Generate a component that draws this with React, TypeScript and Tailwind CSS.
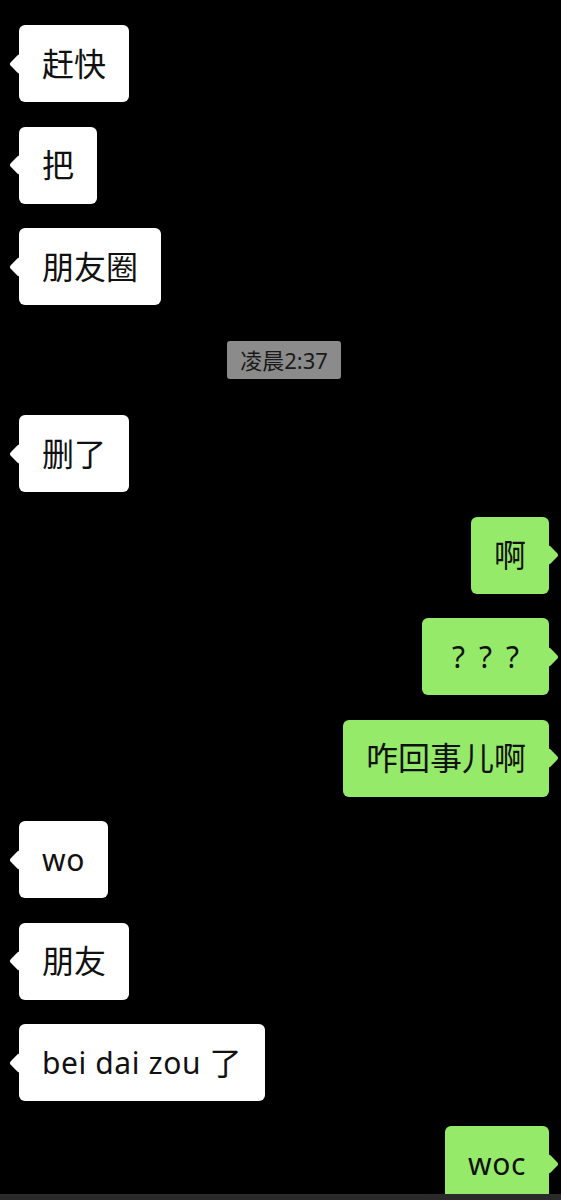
import React from "react";

type Seg = { t: string; latin?: boolean; q?: boolean };
type Msg =
  | { kind: "in" | "out"; segs: Seg[] }
  | { kind: "time"; text: string };

const msgs: Msg[] = [
  { kind: "in", segs: [{ t: "赶快" }] },
  { kind: "in", segs: [{ t: "把" }] },
  { kind: "in", segs: [{ t: "朋友圈" }] },
  { kind: "time", text: "凌晨2:37" },
  { kind: "in", segs: [{ t: "删了" }] },
  { kind: "out", segs: [{ t: "啊" }] },
  { kind: "out", segs: [{ t: "???", q: true }] },
  { kind: "out", segs: [{ t: "咋回事儿啊" }] },
  { kind: "in", segs: [{ t: "wo", latin: true }] },
  { kind: "in", segs: [{ t: "朋友" }] },
  { kind: "in", segs: [{ t: "bei dai zou ", latin: true }, { t: "了" }] },
  { kind: "out", segs: [{ t: "woc", latin: true }] },
];

function Text({ segs }: { segs: Seg[] }) {
  return (
    <span className="whitespace-pre leading-none flex items-center">
      {segs.map((s, i) =>
        s.q ? (
          <span key={i} className="flex text-[30px]">
            {s.t.split("").map((c, j) => (
              <span key={j} className="w-[27px] text-center">
                {c}
              </span>
            ))}
          </span>
        ) : s.latin ? (
          <span key={i} className="text-[30px] tracking-[0.6px]">
            {s.t}
          </span>
        ) : (
          <span key={i} className="text-[32px]">
            {s.t}
          </span>
        )
      )}
    </span>
  );
}

function Bubble({ kind, segs }: { kind: "in" | "out"; segs: Seg[] }) {
  const isIn = kind === "in";
  return (
    <div className={`flex ${isIn ? "justify-start" : "justify-end"}`}>
      <div
        className={`relative h-[77px] px-[23px] flex items-center rounded-[6px] text-[#111] ${
          isIn ? "bg-white" : "bg-[#95ea69]"
        }`}
      >
        <div
          className={`absolute top-1/2 w-[15px] h-[15px] rotate-45 rounded-[3px] -translate-y-1/2 ${
            isIn ? "left-[-7px] bg-white" : "right-[-7px] bg-[#95ea69]"
          }`}
        />
        <div className="relative">
          <Text segs={segs} />
        </div>
      </div>
    </div>
  );
}

export default function App() {
  return (
    <div
      className="w-[561px] h-[1200px] bg-black overflow-hidden flex flex-col"
      style={{ fontFamily: '"Noto Sans", "Noto Sans CJK SC", sans-serif' }}
    >
      <div className="h-[1194px] overflow-hidden pt-[25px] pl-[19px] pr-[12px] flex flex-col gap-[24.5px]">
        {msgs.map((m, i) =>
          m.kind === "time" ? (
            <div key={i} className="flex justify-center my-[11.5px]">
              <div className="h-[38px] px-[13px] flex items-center rounded-[3px] bg-[#8b8b8b] text-[#1a1a1a] text-[22px] leading-none">
                {m.text}
              </div>
            </div>
          ) : (
            <Bubble key={i} kind={m.kind} segs={m.segs} />
          )
        )}
      </div>
      <div className="h-[6px] bg-[#2a2a2a] shrink-0" />
    </div>
  );
}
